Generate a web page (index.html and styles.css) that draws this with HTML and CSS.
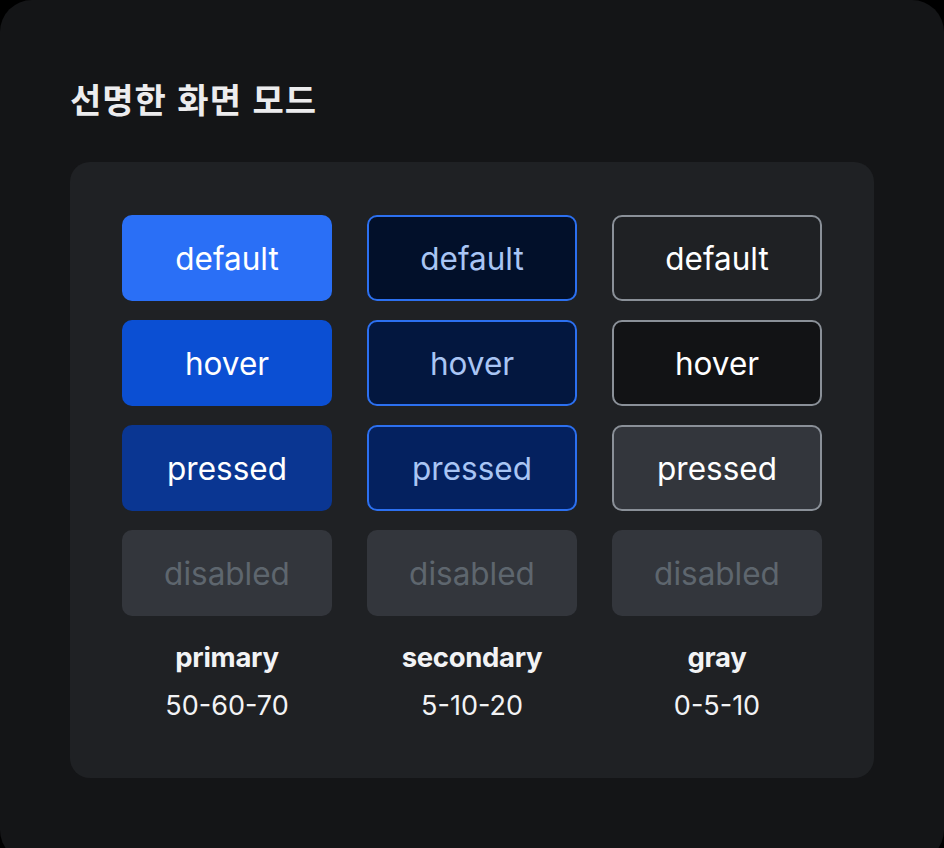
FILE: index.html
```html
<!DOCTYPE html>
<html lang="ko">
<head>
    <meta charset="UTF-8">
    <title>선명한 화면 모드</title>
    <link rel="stylesheet" href="styles.css">
</head>
<body>
    <div class="frame">
        <h1 class="page-title">선명한 화면 모드</h1>

        <!-- Button state matrix -->
        <div class="panel">
            <div class="button-grid">
                <button class="btn btn-primary">default</button>
                <button class="btn btn-secondary">default</button>
                <button class="btn btn-gray">default</button>

                <button class="btn btn-primary is-hover">hover</button>
                <button class="btn btn-secondary is-hover">hover</button>
                <button class="btn btn-gray is-hover">hover</button>

                <button class="btn btn-primary is-pressed">pressed</button>
                <button class="btn btn-secondary is-pressed">pressed</button>
                <button class="btn btn-gray is-pressed">pressed</button>

                <button class="btn" disabled>disabled</button>
                <button class="btn" disabled>disabled</button>
                <button class="btn" disabled>disabled</button>

                <div class="legend">
                    <div class="legend-name">primary</div>
                    <div class="legend-steps">50-60-70</div>
                </div>
                <div class="legend">
                    <div class="legend-name">secondary</div>
                    <div class="legend-steps">5-10-20</div>
                </div>
                <div class="legend">
                    <div class="legend-name">gray</div>
                    <div class="legend-steps">0-5-10</div>
                </div>
            </div>
        </div>
    </div>
</body>
</html>
```

FILE: styles.css
```css
:root {
    --page-bg: #000000;
    --frame-bg: #141517;
    --panel-bg: #1f2124;
    --text: #f2f3f5;
    --primary-50: #2a6ff6;
    --primary-60: #0b4fd3;
    --primary-70: #0a3692;
    --secondary-5: #02102a;
    --secondary-10: #03173f;
    --secondary-20: #04215f;
    --secondary-border: #2c70f0;
    --secondary-text: #a9c5f4;
    --gray-border: #8a9098;
    --gray-5: #121315;
    --gray-10: #33363c;
    --disabled-bg: #33363c;
    --disabled-text: #5e666e;
}
body {
    margin: 0;
    padding: 0;
    background-color: var(--page-bg);
    font-family: Inter, "Noto Sans CJK KR", sans-serif;
    color: var(--text);
    overflow: hidden;
}
.frame {
    background-color: var(--frame-bg);
    border-radius: 32px;
    height: 862px;
    padding: 75px 70px 0;
    box-sizing: border-box;
}
.page-title {
    margin: 0 0 40px;
    font-family: "Noto Sans CJK KR", sans-serif;
    font-size: 34px;
    font-weight: 700;
    line-height: 47px;
    letter-spacing: 1px;
    color: #ececee;
}

/* --- Panel --- */
.panel {
    background-color: var(--panel-bg);
    border-radius: 20px;
    width: 804px;
    height: 616px;
    padding: 53px 52px 0;
    box-sizing: border-box;
}
.button-grid {
    display: grid;
    grid-template-columns: repeat(3, 210px);
    grid-auto-rows: 86px;
    column-gap: 35px;
    row-gap: 19px;
}
.btn {
    font-family: Inter, sans-serif;
    font-size: 31.5px;
    font-weight: 400;
    border: 2px solid transparent;
    border-radius: 10px;
    padding: 0;
    margin: 0;
    color: #ffffff;
    background: none;
}
.btn-primary { background-color: var(--primary-50); }
.btn-primary.is-hover { background-color: var(--primary-60); }
.btn-primary.is-pressed { background-color: var(--primary-70); }

.btn-secondary {
    background-color: var(--secondary-5);
    border-color: var(--secondary-border);
    color: var(--secondary-text);
}
.btn-secondary.is-hover { background-color: var(--secondary-10); }
.btn-secondary.is-pressed { background-color: var(--secondary-20); }

.btn-gray {
    background-color: var(--panel-bg);
    border-color: var(--gray-border);
}
.btn-gray.is-hover { background-color: var(--gray-5); }
.btn-gray.is-pressed { background-color: var(--gray-10); }

.btn:disabled {
    background-color: var(--disabled-bg);
    color: var(--disabled-text);
}

/* --- Legend under each column --- */
.legend {
    text-align: center;
    padding-top: 4px;
}
.legend-name {
    font-size: 27.5px;
    font-weight: 700;
    line-height: 36px;
    letter-spacing: -0.3px;
}
.legend-steps {
    font-size: 27px;
    font-weight: 400;
    line-height: 36px;
    margin-top: 13px;
}
```
